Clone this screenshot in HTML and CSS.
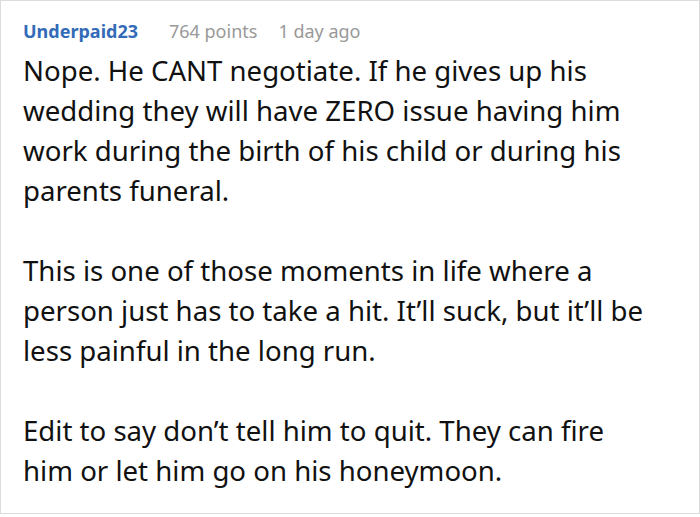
FILE: index.html
```html
<!DOCTYPE html>
<html>
<head>
<meta charset="utf-8">
<link rel="stylesheet" href="styles.css">
</head>
<body>
<div class="comment">
  <div class="meta">
    <span class="author">Underpaid23</span>
    <span class="points">764 points</span>
    <span class="time">1 day ago</span>
  </div>
  <div class="body">
    <p>Nope. He CANT negotiate. If he gives up his wedding they will have ZERO issue having him work during the birth of his child or during his parents funeral.</p>
    <p>This is one of those moments in life where a person just has to take a hit. It’ll suck, but it’ll be less painful in the long run.</p>
    <p>Edit to say don’t tell him to quit. They can fire<br>him or let him go on his honeymoon.</p>
  </div>
</div>
</body>
</html>
```

FILE: styles.css
```css
html, body {
  margin: 0;
  padding: 0;
  background: #fff;
}
.comment {
  box-sizing: border-box;
  width: 700px;
  height: 514px;
  border: 1px solid #dcdcdc;
  padding: 16px 20px 0 22px;
  font-family: "Noto Sans", sans-serif;
  overflow: hidden;
}
.meta {
  display: flex;
  font-size: 18px;
  line-height: 28px;
}
.author {
  color: #336bb8;
  font-weight: bold;
}
.points, .time {
  color: #999;
}
.points {
  margin-left: 31px;
}
.time {
  margin-left: 21px;
}
.body {
  margin-top: 5px;
  font-size: 27.6px;
  line-height: 40px;
  color: #111;
}
.body p {
  margin: 0 0 40px 0;
}
```
